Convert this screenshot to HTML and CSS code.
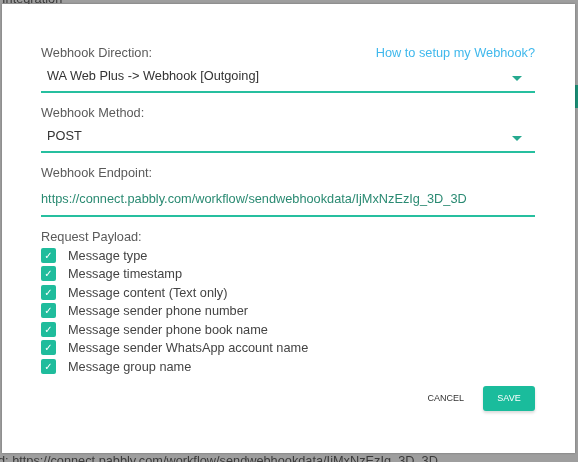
FILE: index.html
```html
<!DOCTYPE html>
<html lang="en">
<head>
    <meta charset="UTF-8">
    <meta name="viewport" content="width=device-width, initial-scale=1.0">
    <title>Webhook settings</title>
    <link rel="stylesheet" href="styles.css">
</head>
<body>
    <!-- Página de fondo, oscurecida por el modal -->
    <div class="backdrop-page">
        <div class="bg-title">Integration</div>
        <div class="bg-spacer"></div>
        <div class="bg-line">d: https://connect.pabbly.com/workflow/sendwebhookdata/IjMxNzEzIg_3D_3D</div>
    </div>
    <div class="bg-tab"></div>

    <div class="modal">
        <div class="field">
            <div class="field-head">
                <label class="field-label">Webhook Direction:</label>
                <a class="help-link" href="#">How to setup my Webhook?</a>
            </div>
            <div class="select">
                <span>WA Web Plus -&gt; Webhook [Outgoing]</span>
                <span class="caret"></span>
            </div>
        </div>

        <div class="field">
            <label class="field-label">Webhook Method:</label>
            <div class="select">
                <span>POST</span>
                <span class="caret"></span>
            </div>
        </div>

        <div class="field">
            <label class="field-label">Webhook Endpoint:</label>
            <div class="text-input">https://connect.pabbly.com/workflow/sendwebhookdata/IjMxNzEzIg_3D_3D</div>
        </div>

        <div class="payload">
            <label class="field-label">Request Payload:</label>
            <ul class="check-list">
                <li><span class="check">✓</span>Message type</li>
                <li><span class="check">✓</span>Message timestamp</li>
                <li><span class="check">✓</span>Message content (Text only)</li>
                <li><span class="check">✓</span>Message sender phone number</li>
                <li><span class="check">✓</span>Message sender phone book name</li>
                <li><span class="check">✓</span>Message sender WhatsApp account name</li>
                <li><span class="check">✓</span>Message group name</li>
            </ul>
        </div>

        <div class="actions">
            <button class="btn-flat">CANCEL</button>
            <button class="btn-save">SAVE</button>
        </div>
    </div>
</body>
</html>
```

FILE: styles.css
```css
/* Estilos generales */
html, body {
    margin: 0;
    padding: 0;
    height: 100%;
    overflow: hidden;
}

body {
    background-color: #9e9e9e;
    font-family: 'Liberation Sans', Arial, sans-serif;
    font-size: 12.75px;
    color: #333;
}

/* Página de fondo */
.backdrop-page {
    display: flex;
    flex-direction: column;
    height: 100%;
    padding-left: 2px;
    color: #3a3a3a;
    filter: blur(0.5px);
}

.bg-title {
    margin-top: -9px;
}

.bg-spacer {
    flex: 1;
}

.bg-line {
    line-height: 14px;
    margin-bottom: -6px;
    margin-left: -4px;
}

.bg-tab {
    position: fixed;
    top: 85px;
    right: 0;
    width: 3px;
    height: 23px;
    background-color: #1b8c74;
}

/* Modal */
.modal {
    position: fixed;
    top: 4px;
    left: 2px;
    width: 573px;
    height: 449px;
    box-sizing: border-box;
    background-color: #fff;
    padding: 41px 40px 0 39px;
    box-shadow: 0 0 2px rgba(0, 0, 0, 0.3);
}

.field {
    margin-bottom: 12px;
}

.field-head {
    display: flex;
    justify-content: space-between;
    align-items: flex-end;
}

.field-label {
    display: block;
    line-height: 16px;
    color: #5a5a5a;
}

.help-link {
    color: #3fb8ec;
    text-decoration: none;
    line-height: 16px;
}

.select {
    display: flex;
    justify-content: space-between;
    align-items: center;
    padding: 7px 13px 7px 6px;
    line-height: 16px;
    border-bottom: 2px solid #26bf9f;
    color: #333;
}

.caret {
    width: 0;
    height: 0;
    border-left: 5px solid transparent;
    border-right: 5px solid transparent;
    border-top: 5px solid #26a98f;
    margin-top: 4px;
}

.text-input {
    padding: 10px 0 8px 0;
    line-height: 16px;
    border-bottom: 2px solid #26bf9f;
    color: #2a8a72;
}

/* Casillas */
.payload {
    margin-top: 9px;
}

.check-list {
    list-style: none;
    margin: 1px 0 0 0;
    padding: 0;
}

.check-list li {
    display: flex;
    align-items: center;
    height: 18.5px;
    color: #444;
}

.check {
    display: flex;
    justify-content: center;
    align-items: center;
    width: 15px;
    height: 15px;
    border-radius: 2px;
    background-color: #1fbc9c;
    margin-right: 12px;
    color: #fff;
    font-family: 'DejaVu Sans', sans-serif;
    font-size: 10px;
    line-height: 15px;
}

/* Botones */
.actions {
    display: flex;
    justify-content: flex-end;
    align-items: center;
    margin-top: 10px;
}

.btn-flat {
    background: transparent;
    border: none;
    font-family: inherit;
    font-size: 9px;
    color: #333;
    padding: 0;
    margin-right: 19px;
    cursor: pointer;
}

.btn-save {
    width: 52px;
    height: 25px;
    border: none;
    border-radius: 3px;
    background-color: #1abc9c;
    color: #fff;
    font-family: inherit;
    font-size: 9px;
    cursor: pointer;
    box-shadow: 0 2px 3px rgba(0, 0, 0, 0.15);
}
```
